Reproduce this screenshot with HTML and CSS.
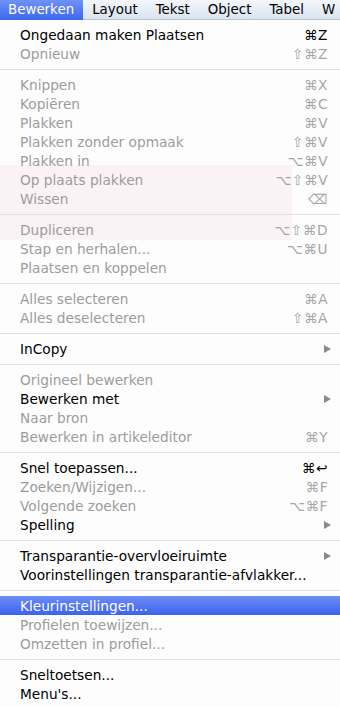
FILE: index.html
```html
<!DOCTYPE html>
<html>
<head>
<meta charset="utf-8">
<link rel="stylesheet" href="styles.css">
</head>
<body>

<div class="menubar">
  <span class="title active">Bewerken</span>
  <span class="title">Layout</span>
  <span class="title">Tekst</span>
  <span class="title">Object</span>
  <span class="title">Tabel</span>
  <span class="title">W</span>
</div>

<ul class="menu">
  <li class="item"><span>Ongedaan maken Plaatsen</span><span class="key">&#8984;Z</span></li>
  <li class="item off"><span>Opnieuw</span><span class="key">&#8679;&#8984;Z</span></li>
  <li class="sep"></li>
  <li class="item off"><span>Knippen</span><span class="key">&#8984;X</span></li>
  <li class="item off"><span>Kopiëren</span><span class="key">&#8984;C</span></li>
  <li class="item off"><span>Plakken</span><span class="key">&#8984;V</span></li>
  <li class="item off"><span>Plakken zonder opmaak</span><span class="key">&#8679;&#8984;V</span></li>
  <li class="item off"><span>Plakken in</span><span class="key">&#8997;&#8984;V</span></li>
  <li class="item off"><span>Op plaats plakken</span><span class="key">&#8997;&#8679;&#8984;V</span></li>
  <li class="item off"><span>Wissen</span><span class="key">&#9003;</span></li>
  <li class="sep"></li>
  <li class="item off"><span>Dupliceren</span><span class="key">&#8997;&#8679;&#8984;D</span></li>
  <li class="item off"><span>Stap en herhalen...</span><span class="key">&#8997;&#8984;U</span></li>
  <li class="item off"><span>Plaatsen en koppelen</span></li>
  <li class="sep"></li>
  <li class="item off"><span>Alles selecteren</span><span class="key">&#8984;A</span></li>
  <li class="item off"><span>Alles deselecteren</span><span class="key">&#8679;&#8984;A</span></li>
  <li class="sep"></li>
  <li class="item sub"><span>InCopy</span></li>
  <li class="sep"></li>
  <li class="item off"><span>Origineel bewerken</span></li>
  <li class="item sub"><span>Bewerken met</span></li>
  <li class="item off"><span>Naar bron</span></li>
  <li class="item off"><span>Bewerken in artikeleditor</span><span class="key">&#8984;Y</span></li>
  <li class="sep"></li>
  <li class="item"><span>Snel toepassen...</span><span class="key">&#8984;&#8617;</span></li>
  <li class="item off"><span>Zoeken/Wijzigen...</span><span class="key">&#8984;F</span></li>
  <li class="item off"><span>Volgende zoeken</span><span class="key">&#8997;&#8984;F</span></li>
  <li class="item sub"><span>Spelling</span></li>
  <li class="sep"></li>
  <li class="item sub"><span>Transparantie-overvloeiruimte</span></li>
  <li class="item"><span>Voorinstellingen transparantie-afvlakker...</span></li>
  <li class="sep"></li>
  <li class="item hover"><span>Kleurinstellingen...</span></li>
  <li class="item off"><span>Profielen toewijzen...</span></li>
  <li class="item off"><span>Omzetten in profiel...</span></li>
  <li class="sep"></li>
  <li class="item"><span>Sneltoetsen...</span></li>
  <li class="item"><span>Menu's...</span></li>
</ul>

</body>
</html>
```

FILE: styles.css
```css
body {
    margin: 0;
    width: 340px;
    height: 707px;
    overflow: hidden;
    font-family: "DejaVu Sans", sans-serif;
    font-size: 13.7px;
    color: #000;
    background: #fdfdfd;
}

.menubar {
    display: flex;
    height: 20px;
    align-items: center;
    background: linear-gradient(#f3f6fb, #dbe4ef);
    border-bottom: 1px solid #b9c3cf;
    box-sizing: border-box;
    white-space: nowrap;
    font-size: 13.4px;
}

.title {
    height: 20px;
    line-height: 20px;
    padding: 0 9px 0 9px;
}

.title.active {
    padding: 0 9px 0 8px;
    color: #fff;
    background: linear-gradient(#6f92f7, #3c66ee);
}

.menu {
    list-style: none;
    margin: 0;
    padding: 5px 0 0;
    background:
        linear-gradient(#fbf2f6, #fbf2f6) no-repeat 0 145px / 292px 75px,
        #fdfdfd;
}

.item {
    display: flex;
    justify-content: space-between;
    align-items: center;
    height: 19px;
    padding: 0 12px 0 20px;
    white-space: nowrap;
}

.item.off {
    color: #9c9c9c;
}

.key {
    color: inherit;
    letter-spacing: 0.5px;
}

.item.off .key {
    color: #a6a6a6;
}

.item.sub::after {
    content: "";
    border-left: 7px solid #8a8a8a;
    border-top: 4.5px solid transparent;
    border-bottom: 4.5px solid transparent;
    margin-right: -3px;
}

.item.hover {
    color: #fff;
    background: linear-gradient(#6d8ef6, #3b63ec);
}

.sep {
    height: 12px;
    display: flex;
    align-items: center;
}

.sep::before {
    content: "";
    flex: 1;
    height: 1px;
    background: #e1e1e1;
}
```
